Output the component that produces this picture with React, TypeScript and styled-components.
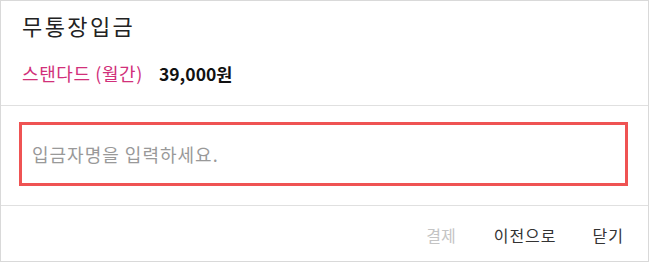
import React from "react";
import styled, { createGlobalStyle } from "styled-components";

const Global = createGlobalStyle`
  html, body { margin: 0; padding: 0; background: #fff; }
  body { font-family: "Noto Sans CJK KR", "Noto Sans", sans-serif; }
`;

const Dialog = styled.div`
  box-sizing: border-box;
  width: 649px;
  height: 262px;
  border: 1px solid #d9d9d9;
  display: flex;
  flex-direction: column;
  background: #fff;
`;

const Header = styled.div`
  box-sizing: border-box;
  height: 105px;
  padding: 8px 20px 0 21px;
  border-bottom: 1px solid #e0e0e0;
  display: flex;
  flex-direction: column;
`;

const Title = styled.h2`
  margin: 0;
  font-size: 22px;
  font-weight: 400;
  color: #222;
  line-height: 32px;
  letter-spacing: 2.4px;
`;

const PlanRow = styled.div`
  margin-top: 19px;
  display: flex;
  align-items: baseline;
  gap: 16px;
  font-size: 18px;
  line-height: 26px;
`;

const PlanName = styled.span`
  color: #d1307a;
  letter-spacing: 0.6px;
`;

const Price = styled.span`
  color: #111;
  font-weight: 700;
  font-size: 17.5px;
`;

const Body = styled.div`
  box-sizing: border-box;
  height: 100px;
  padding: 16px 20px 0 18px;
  border-bottom: 1px solid #e0e0e0;
`;

const NameInput = styled.input`
  box-sizing: border-box;
  width: 100%;
  height: 64px;
  border: 3px solid #ef5353;
  padding: 0 10px;
  font-family: "Noto Sans CJK KR", "Noto Sans", sans-serif;
  font-size: 18px;
  letter-spacing: 1px;
  color: #333;
  outline: none;
  &::placeholder { color: #999; }
`;

const Footer = styled.div`
  flex: 1;
  display: flex;
  justify-content: flex-end;
  align-items: center;
  padding-right: 24px;
  gap: 36px;
`;

const FooterButton = styled.button<{ $disabled?: boolean }>`
  background: none;
  border: none;
  padding: 0;
  font-family: "Noto Sans CJK KR", "Noto Sans", sans-serif;
  font-size: 16px;
  letter-spacing: 1px;
  color: ${(p) => (p.$disabled ? "#c4c4c4" : "#333")};
  cursor: pointer;
  margin-top: 2px;
  &:first-child { letter-spacing: 0; margin-right: 2px; }
`;

export default function App() {
  return (
    <>
      <Global />
      <Dialog>
        <Header>
          <Title>무통장입금</Title>
          <PlanRow>
            <PlanName>스탠다드 (월간)</PlanName>
            <Price>39,000원</Price>
          </PlanRow>
        </Header>
        <Body>
          <NameInput placeholder="입금자명을 입력하세요." />
        </Body>
        <Footer>
          <FooterButton $disabled>결제</FooterButton>
          <FooterButton>이전으로</FooterButton>
          <FooterButton>닫기</FooterButton>
        </Footer>
      </Dialog>
    </>
  );
}
